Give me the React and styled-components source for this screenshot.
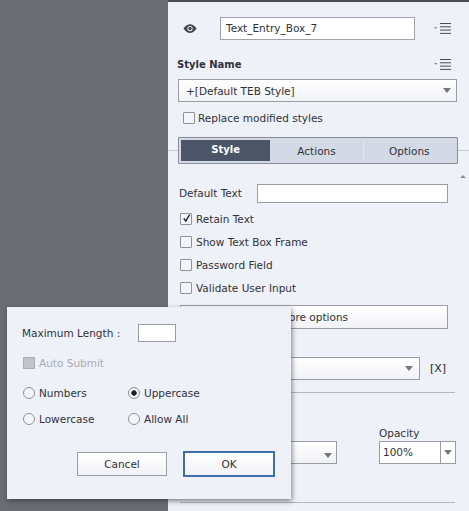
import React from 'react';
import styled, { createGlobalStyle } from 'styled-components';

const GlobalStyle = createGlobalStyle`
    html, body {
        margin: 0;
        padding: 0;
        background: #eff1f8;
    }
    body {
        font-family: "DejaVu Sans", "Liberation Sans", sans-serif;
        font-size: 10.5px;
        color: #2f3238;
    }
`;

// Little icons
const Eye = () => (
    <svg width="14" height="9" viewBox="0 0 16 10">
        <path d="M0.5 5C3 1.2 5.5 0 8 0s5 1.2 7.5 5C13 8.8 10.5 10 8 10S3 8.8 0.5 5z" fill="#41454f" />
        <circle cx="8" cy="5" r="3" fill="#eff1f8" />
        <circle cx="8" cy="5" r="1.9" fill="#41454f" />
    </svg>
);

const MenuIcon = () => (
    <svg width="18" height="11" viewBox="0 0 18 11">
        <path d="M0 4h3.5L1.8 6z" fill="#8b8f98" />
        <path d="M6 .5h11M6 3.8h11M6 7.1h11M6 10.4h11" stroke="#4a4e58" strokeWidth="1" fill="none" />
    </svg>
);

const Caret = () => (
    <svg width="8" height="5" viewBox="0 0 10 6">
        <path d="M0 0h10L5 6z" fill="#72767f" />
    </svg>
);

const Tick = () => (
    <svg width="13" height="13" viewBox="0 0 13 13">
        <path d="M2.5 6.5l3 3.6L11 1" stroke="#1e2025" strokeWidth="2" fill="none" />
    </svg>
);

const App = () => {
    return (
        <>
            <GlobalStyle />
            <Page>
                <Backdrop />
                <Panel>
                    <NameRow>
                        <EyeSlot><Eye /></EyeSlot>
                        <NameInput>Text_Entry_Box_7</NameInput>
                        <MenuSlot><MenuIcon /></MenuSlot>
                    </NameRow>
                    <StyleHead>
                        <StyleTitle>Style Name</StyleTitle>
                        <MenuSlot><MenuIcon /></MenuSlot>
                    </StyleHead>
                    <StyleSelect>
                        +[Default TEB Style]
                        <Caret />
                    </StyleSelect>
                    <ReplaceRow>
                        <Check />
                        Replace modified styles
                    </ReplaceRow>
                    <TabsWrap>
                        <Tabs>
                            <Tab $active $width={90}>Style</Tab>
                            <Tab $width={94}>Actions</Tab>
                            <Tab $width={92}>Options</Tab>
                        </Tabs>
                    </TabsWrap>
                    <ScrollArrow />
                    <DefaultRow>
                        <DefaultLabel>Default Text</DefaultLabel>
                        <DefaultInput />
                    </DefaultRow>
                    <OptionList>
                        <CheckRow><Check><Tick /></Check>Retain Text</CheckRow>
                        <CheckRow><Check />Show Text Box Frame</CheckRow>
                        <CheckRow><Check />Password Field</CheckRow>
                        <CheckRow><Check />Validate User Input</CheckRow>
                    </OptionList>
                    <MoreButton>More options</MoreButton>
                    <VarRow>
                        <VarSelect><Caret /></VarSelect>
                        <VarTag>[X]</VarTag>
                    </VarRow>
                    <Rule />
                    <LowerRow>
                        <SmallSelect><Caret /></SmallSelect>
                        <OpacityCol>
                            Opacity
                            <OpacityBox>
                                <OpacityValue>100%</OpacityValue>
                                <OpacityCaret><Caret /></OpacityCaret>
                            </OpacityBox>
                        </OpacityCol>
                    </LowerRow>
                    <LastRule />
                </Panel>
                <Dialog>
                    <LengthRow>
                        Maximum Length :
                        <LengthInput />
                    </LengthRow>
                    <AutoRow>
                        <DisabledCheck />
                        Auto Submit
                    </AutoRow>
                    <RadioGrid>
                        <RadioItem><Radio />Numbers</RadioItem>
                        <RadioItem><Radio $on />Uppercase</RadioItem>
                        <RadioItem><Radio />Lowercase</RadioItem>
                        <RadioItem><Radio />Allow All</RadioItem>
                    </RadioGrid>
                    <DialogButtons>
                        <CancelButton>Cancel</CancelButton>
                        <OkButton>OK</OkButton>
                    </DialogButtons>
                </Dialog>
            </Page>
        </>
    );
};

const Page = styled.div`
    position: relative;
    display: flex;
    width: 469px;
    height: 511px;
    overflow: hidden;
`;

const Backdrop = styled.div`
    width: 168px;
    flex: none;
    background: #6a6d74;
`;

const Panel = styled.div`
    flex: 1;
    display: flex;
    flex-direction: column;
    background: #eff1f8;
    border-top: 2px solid #4a4c52;
`;

const NameRow = styled.div`
    display: flex;
    align-items: center;
    height: 22px;
    margin-top: 15px;
`;

const EyeSlot = styled.div`
    width: 52px;
    padding-left: 15px;
    box-sizing: border-box;
    display: flex;
`;

const NameInput = styled.div`
    width: 195px;
    height: 23px;
    line-height: 20px;
    box-sizing: border-box;
    padding-left: 5px;
    background: #fff;
    border: 1px solid #9fa2a9;
`;

const MenuSlot = styled.div`
    margin-left: auto;
    margin-right: 17px;
    display: flex;
`;

const StyleHead = styled.div`
    display: flex;
    align-items: center;
    height: 16px;
    margin: 17px 0 0 9px;
`;

const StyleTitle = styled.div`
    font-size: 10px;
    font-weight: 700;
`;

const selectFace = `
    background: linear-gradient(#ffffff, #f1f2f6);
    border: 1px solid #9a9da4;
    box-sizing: border-box;
`;

const StyleSelect = styled.div`
    ${selectFace}
    display: flex;
    align-items: center;
    justify-content: space-between;
    width: 279px;
    height: 23px;
    margin: 7px 0 0 10px;
    padding: 0 5px 0 7px;
`;

const ReplaceRow = styled.div`
    display: flex;
    align-items: center;
    gap: 3px;
    height: 16px;
    margin: 8px 0 0 15px;
`;

const Check = styled.span`
    width: 12px;
    height: 12px;
    flex: none;
    box-sizing: border-box;
    display: flex;
    align-items: center;
    justify-content: center;
    background: #f4f5f9;
    border: 1px solid #8f929a;
    border-radius: 1px;
    svg {
        margin: -2px 0 0 1px;
    }
`;

const TabsWrap = styled.div`
    margin-top: 11px;
    height: 27px;
    background: linear-gradient(transparent 13px, #c9ccd4 13px, #c9ccd4 14px, transparent 14px);
`;

const Tabs = styled.div`
    display: flex;
    width: 280px;
    height: 27px;
    margin-left: 10px;
    box-sizing: border-box;
    padding: 2px;
    background: #d4d9e6;
    border: 1px solid #888b93;
    border-radius: 1px;
`;

const Tab = styled.div`
    width: ${(p) => p.$width}px;
    display: flex;
    align-items: center;
    justify-content: center;
    box-sizing: border-box;
    padding-bottom: ${(p) => (p.$active ? '3px' : '0')};
    border-right: ${(p) => (p.$active ? 'none' : '1px solid #e2e5ee')};
    background: ${(p) => (p.$active ? '#4c5568' : 'transparent')};
    color: ${(p) => (p.$active ? '#fff' : '#2f3238')};
    font-weight: ${(p) => (p.$active ? 700 : 400)};
    font-size: ${(p) => (p.$active ? '10px' : '10.5px')};
    &:last-child {
        border-right: none;
    }
`;

const ScrollArrow = styled.div`
    align-self: flex-end;
    width: 0;
    height: 0;
    margin: 11px 3px 0 0;
    border-left: 3px solid transparent;
    border-right: 3px solid transparent;
    border-bottom: 3px solid #8d9098;
`;

const DefaultRow = styled.div`
    display: flex;
    align-items: center;
    justify-content: space-between;
    width: 269px;
    height: 19px;
    margin: 6px 0 0 11px;
`;

const DefaultLabel = styled.span`
    padding-bottom: 1px;
`;

const DefaultInput = styled.div`
    width: 191px;
    height: 19px;
    box-sizing: border-box;
    background: #fff;
    border: 1px solid #9a9da4;
`;

const OptionList = styled.div`
    display: flex;
    flex-direction: column;
    gap: 7px;
    margin: 8px 0 0 12px;
`;

const CheckRow = styled.div`
    display: flex;
    align-items: center;
    gap: 4px;
    height: 16px;
`;

const MoreButton = styled.div`
    ${selectFace}
    width: 268px;
    height: 24px;
    margin: 9px 0 0 12px;
    display: flex;
    align-items: center;
    justify-content: center;
`;

const VarRow = styled.div`
    display: flex;
    align-items: center;
    margin: 28px 0 0 12px;
`;

const VarSelect = styled.div`
    ${selectFace}
    width: 240px;
    height: 23px;
    display: flex;
    align-items: center;
    justify-content: flex-end;
    padding-right: 6px;
`;

const VarTag = styled.div`
    margin-left: 10px;
    font-size: 11px;
    color: #26282d;
`;

const Rule = styled.div`
    width: 275px;
    height: 1px;
    margin: 12px 0 0 12px;
    background: #b5b8c0;
`;

const LowerRow = styled.div`
    display: flex;
    align-items: flex-end;
    margin: 34px 0 0 12px;
`;

const SmallSelect = styled.div`
    ${selectFace}
    width: 157px;
    height: 23px;
    display: flex;
    align-items: flex-end;
    justify-content: flex-end;
    padding: 0 4px 5px 0;
`;

const OpacityCol = styled.div`
    display: flex;
    flex-direction: column;
    gap: 2px;
    margin-left: 42px;
`;

const OpacityBox = styled.div`
    display: flex;
    width: 77px;
    height: 23px;
    box-sizing: border-box;
    background: #fff;
    border: 1px solid #9a9da4;
`;

const OpacityValue = styled.div`
    flex: 1;
    line-height: 21px;
    padding-left: 3px;
    border-right: 1px solid #9a9da4;
`;

const OpacityCaret = styled.div`
    width: 14px;
    display: flex;
    align-items: center;
    justify-content: center;
`;

const LastRule = styled(Rule)`
    margin-top: 38px;
`;

// Floating dialog
const Dialog = styled.div`
    position: absolute;
    left: 7px;
    top: 307px;
    width: 284px;
    height: 192px;
    box-sizing: border-box;
    padding: 16px 15px 0 15px;
    background: #eff1f8;
    box-shadow: 1px 2px 5px rgba(30, 32, 38, 0.55);
    display: flex;
    flex-direction: column;
`;

const LengthRow = styled.div`
    display: flex;
    align-items: center;
    height: 19px;
`;

const LengthInput = styled.div`
    position: absolute;
    left: 131px;
    width: 38px;
    height: 18px;
    box-sizing: border-box;
    background: #fff;
    border: 1px solid #9a9da4;
`;

const AutoRow = styled.div`
    display: flex;
    align-items: center;
    gap: 4px;
    height: 16px;
    margin: 13px 0 0 1px;
    color: #a8abb2;
`;

const DisabledCheck = styled.span`
    width: 12px;
    height: 12px;
    box-sizing: border-box;
    background: #c2c3c8;
    border: 1px solid #a9abb1;
`;

const RadioGrid = styled.div`
    display: grid;
    grid-template-columns: 105px 1fr;
    row-gap: 10px;
    margin: 14px 0 0 1px;
`;

const RadioItem = styled.div`
    display: flex;
    align-items: center;
    gap: 4px;
    height: 16px;
`;

const Radio = styled.span`
    width: 12px;
    height: 12px;
    box-sizing: border-box;
    border: 1px solid #8f929a;
    border-radius: 50%;
    background: ${(p) => (p.$on ? 'radial-gradient(circle, #1f2126 0, #1f2126 2.4px, #f4f5f9 3px)' : '#f4f5f9')};
`;

const DialogButtons = styled.div`
    display: flex;
    align-items: center;
    gap: 16px;
    margin: 24px 1px 0 55px;
`;

const CancelButton = styled.div`
    ${selectFace}
    width: 90px;
    height: 24px;
    display: flex;
    align-items: center;
    justify-content: center;
`;

const OkButton = styled(CancelButton)`
    width: 92px;
    height: 26px;
    border: 2px solid #3f6ea8;
`;

export default App;
